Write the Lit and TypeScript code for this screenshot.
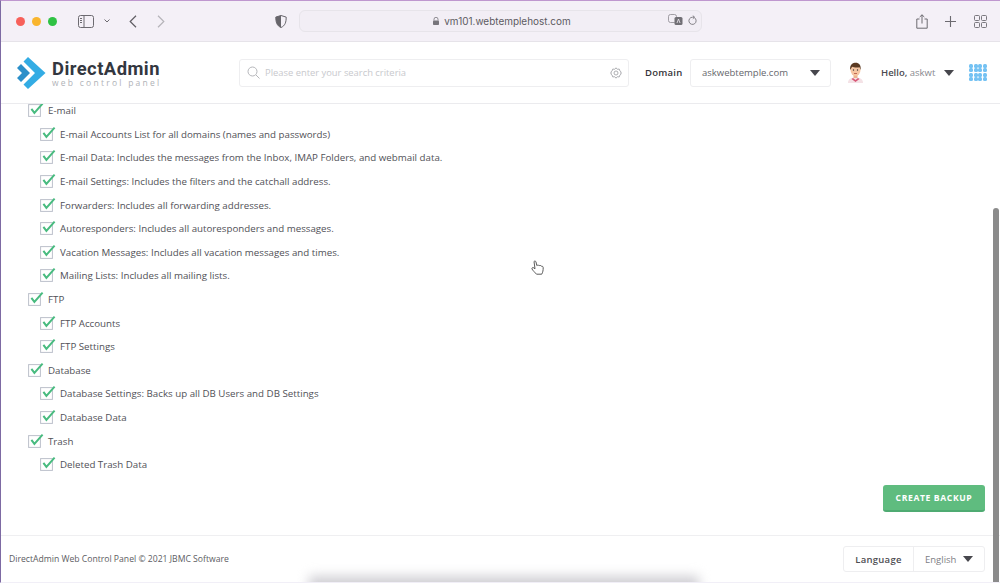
import { LitElement, html, css } from "lit";
import { customElement } from "lit/decorators.js";

type Row = { label: string; sub?: boolean };

const ROWS: Row[] = [
  { label: "E-mail" },
  { label: "E-mail Accounts List for all domains (names and passwords)", sub: true },
  { label: "E-mail Data: Includes the messages from the Inbox, IMAP Folders, and webmail data.", sub: true },
  { label: "E-mail Settings: Includes the filters and the catchall address.", sub: true },
  { label: "Forwarders: Includes all forwarding addresses.", sub: true },
  { label: "Autoresponders: Includes all autoresponders and messages.", sub: true },
  { label: "Vacation Messages: Includes all vacation messages and times.", sub: true },
  { label: "Mailing Lists: Includes all mailing lists.", sub: true },
  { label: "FTP" },
  { label: "FTP Accounts", sub: true },
  { label: "FTP Settings", sub: true },
  { label: "Database" },
  { label: "Database Settings: Backs up all DB Users and DB Settings", sub: true },
  { label: "Database Data", sub: true },
  { label: "Trash" },
  { label: "Deleted Trash Data", sub: true },
];

const caret = html`<svg class="caret" width="10" height="6" viewBox="0 0 10 6"><path d="M0 0h10L5 6z" fill="#47474d"/></svg>`;

const check = html`<svg class="check" width="16" height="15" viewBox="0 0 16 15">
  <rect x="0.6" y="2.6" width="11.800" height="11.800" fill="none" stroke="#bcc0cb" stroke-width="1"/>
  <path d="M3.400 6.800l3 4L14.600 1.600" fill="none" stroke="#48bb7f" stroke-width="2"/>
</svg>`;

@customElement("app-root")
export class AppRoot extends LitElement {
  static styles = css`
    :host {
      display: block;
      width: 1000px;
      height: 583px;
      overflow: hidden;
      font-family: "Open Sans", sans-serif;
      color: #4a4a50;
    }
    .window {
      position: relative;
      display: flex;
      flex-direction: column;
      width: 1000px;
      height: 583px;
      box-sizing: border-box;
      background: #fff;
      border-left: 1px solid #7d6aa3;
      border-top: 1px solid #bf97cf;
      border-bottom: 1px solid #f1eff7;
      overflow: hidden;
    }
    /* Browser toolbar */
    .toolbar {
      flex: none;
      height: 41px;
      box-sizing: border-box;
      display: flex;
      align-items: center;
      background: #f4f0f7;
      border-bottom: 1px solid #e6e3e9;
      padding-left: 15px;
    }
    .dots { display: flex; gap: 7px; width: 62px; }
    .dot { width: 9px; height: 9px; border-radius: 50%; }
    .r { background: #f7605a; }
    .y { background: #f9b52e; }
    .g { background: #2fc244; }
    .tool { display: block; flex: none; }
    .t-chev { margin-left: 10px; }
    .t-back { margin-left: 19px; }
    .t-fwd { margin-left: 20px; }
    .t-shield { margin-left: 110px; }
    .address {
      flex: none;
      position: relative;
      margin-left: 12px;
      width: 403px;
      height: 22px;
      box-sizing: border-box;
      border: 1px solid #e7e4ea;
      border-radius: 6px;
      background: #f2eef5;
      display: flex;
      align-items: center;
      justify-content: center;
      font-size: 9.950px;
      color: #5d5b62;
      gap: 5px;
      padding-left: 3px;
      font-family: "Inter", sans-serif;
    }
    .addr-right {
      position: absolute;
      right: 4px;
      top: 3px;
      display: flex;
      gap: 5px;
      align-items: center;
    }
    .t-share { margin-left: 214px; }
    .t-plus { margin-left: 17px; }
    .t-tabs { margin-left: 18px; }

    /* Site header */
    .header {
      flex: none;
      height: 62px;
      box-sizing: border-box;
      display: flex;
      align-items: center;
      border-bottom: 1px solid #ebebee;
      padding-left: 15px;
    }
    .logo { display: flex; align-items: center; width: 223px; gap: 6px; }
    .logo-text { display: flex; flex-direction: column; padding-top: 1px; }
    .logo-name {
      font-family: "Roboto", sans-serif;
      font-weight: 700;
      font-size: 18.400px;
      line-height: 18px;
      letter-spacing: 0.45px;
      color: #33373f;
    }
    .logo-sub {
      font-family: "Open Sans", sans-serif;
      font-size: 8.500px;
      line-height: 9px;
      letter-spacing: 2.250px;
      color: #b0b2b7;
      white-space: nowrap;
    }
    .search {
      flex: none;
      width: 390px;
      height: 28px;
      box-sizing: border-box;
      border: 1px solid #eeeef0;
      border-radius: 3px;
      display: flex;
      align-items: center;
      padding: 0 6px 0 7px;
      gap: 5px;
      font-size: 9.400px;
      color: #c8c9cd;
    }
    .search span { flex: 1; }
    .domain-label {
      margin-left: 16px;
      width: 45px;
      font-size: 9.500px;
      font-weight: 600;
      color: #35353a;
      letter-spacing: 0.25px;
    }
    .select {
      flex: none;
      width: 141px;
      height: 28px;
      box-sizing: border-box;
      border: 1px solid #eeeef0;
      border-radius: 3px;
      display: flex;
      align-items: center;
      justify-content: space-between;
      padding: 0 10px 0 11px;
      font-size: 9.500px;
      color: #66666c;
    }
    .avatar { margin-left: 16px; flex: none; }
    .hello { margin-left: 17px; width: 63px; font-size: 9.500px; color: #88888e; white-space: nowrap; }
    .hello b { font-weight: 600; color: #4b4b50; }
    .apps {
      margin-left: 15px;
      display: grid;
      grid-template-columns: repeat(4, 4px);
      grid-auto-rows: 4px;
      gap: 0.5px;
    }
    .apps i { background: #74c2f3; border-radius: 1.500px; }

    /* Content */
    .content {
      flex: 1;
      min-height: 0;
      overflow: hidden;
      display: flex;
      flex-direction: column;
    }
    .rows { display: flex; flex-direction: column; margin-top: -5px; padding-left: 27px; height: 371px; }
    .row {
      height: 23.600px;
      flex: none;
      display: flex;
      align-items: center;
      gap: 4px;
      font-size: 9.740px;
      color: #515157;
      white-space: nowrap;
    }
    .row.sub { padding-left: 12px; }
    .check { flex: none; margin-top: -2px; }
    .actions { display: flex; justify-content: flex-end; padding-right: 15px; margin-top: 15px; }
    .btn {
      width: 102px;
      height: 27px;
      box-sizing: border-box;
      border: 0;
      border-bottom: 2px solid #4fab72;
      border-radius: 3px;
      background: #5fbc7f;
      color: #fff;
      font: 700 8.600px "Open Sans", sans-serif;
      letter-spacing: 0.62px;
      padding: 0;
    }

    /* Footer */
    .footer {
      flex: none;
      height: 47px;
      box-sizing: border-box;
      border-top: 1px solid #efeff1;
      display: flex;
      align-items: center;
      justify-content: space-between;
      padding: 0 15px 0 8px;
      font-size: 8.650px;
      color: #5c5c62;
    }
    .lang {
      display: flex;
      width: 142px;
      height: 26px;
      box-sizing: border-box;
      border: 1px solid #eeeef0;
      border-radius: 3px;
      font-size: 9.500px;
    }
    .lang-label {
      width: 69px;
      border-right: 1px solid #eeeef0;
      display: flex;
      align-items: center;
      justify-content: center;
      font-weight: 600;
      letter-spacing: 0.25px;
      color: #4e4e53;
    }
    .lang-value {
      flex: 1;
      display: flex;
      align-items: center;
      justify-content: space-between;
      padding: 0 11px 0 11px;
      color: #808085;
    }

    /* Overlays */
    .scrollbar {
      position: absolute;
      left: 992px;
      top: 207px;
      width: 6px;
      height: 376px;
      background: #8b8b8b;
      border-radius: 3px 3px 0 0;
    }
    .cursor { position: absolute; left: 530px; top: 259px; }
    .dock {
      position: absolute;
      left: 308px;
      top: 575px;
      width: 390px;
      height: 24px;
      background: #d0cfd4;
      filter: blur(6px);
    }
  `;

  render() {
    const stroke = "#6c6a70";
    return html`<div class="window">
      <div class="toolbar">
        <div class="dots"><div class="dot r"></div><div class="dot y"></div><div class="dot g"></div></div>
        <svg class="tool" width="16" height="13" viewBox="0 0 16 13" fill="none" stroke="${stroke}">
          <rect x="0.5" y="0.5" width="15" height="12" rx="2"/><path d="M6 .5v12M2 3.500h2M2 5.500h2M2 7.500h2"/>
        </svg>
        <svg class="tool t-chev" width="6" height="4" viewBox="0 0 6 4" fill="none" stroke="${stroke}"><path d="M.5.5L3 3 5.500.5"/></svg>
        <svg class="tool t-back" width="8" height="13" viewBox="0 0 8 13" fill="none" stroke="#5f5d63" stroke-width="1.200"><path d="M7 .8L1.200 6.500 7 12.200"/></svg>
        <svg class="tool t-fwd" width="8" height="13" viewBox="0 0 8 13" fill="none" stroke="#b5b3b9" stroke-width="1.200"><path d="M1 .8l5.800 5.700L1 12.200"/></svg>
        <svg class="tool t-shield" width="12" height="13" viewBox="0 0 12 13">
          <path d="M6 .5l5.200 1.600c0 5-1 8.600-5.200 10.400C1.800 10.700.8 7.100.8 2.100z" fill="#f4f0f7" stroke="#67656b"/>
          <path d="M6 .5v12C1.800 10.700.8 7.100.8 2.100z" fill="#67656b"/>
        </svg>
        <div class="address">
          <svg width="6" height="8" viewBox="0 0 6 8"><path d="M1 3.500V2.300a2 2 0 0 1 4 0v1.200" fill="none" stroke="#77757b" stroke-width=".8"/><rect y="3.400" width="6" height="4.600" rx=".8" fill="#77757b"/></svg>
          <span>vm101.webtemplehost.com</span>
          <div class="addr-right">
            <svg width="15" height="12" viewBox="0 0 15 12">
              <rect x=".5" y=".5" width="8" height="8" rx="2" fill="none" stroke="#8b898f" stroke-width=".8"/>
              <rect x="6.500" y="3" width="8" height="8" rx="1.500" fill="#716f75"/>
              <path d="M9 9l1.500-4L12 9" fill="none" stroke="#f2eef5" stroke-width=".8"/>
            </svg>
            <svg width="9" height="11" viewBox="0 0 9 11" fill="none" stroke="#77757b" stroke-width=".9">
              <path d="M6.500 2.800a3.600 3.600 0 1 1-2-.6h2M4.800.6l1.700 1.600-1.700 1.600"/>
            </svg>
          </div>
        </div>
        <svg class="tool t-share" width="12" height="15" viewBox="0 0 12 15" fill="none" stroke="${stroke}" stroke-width="1">
          <path d="M3.500 5H.8v9.200h10.400V5H8.500M6 9.500V.8M3.700 3L6 .8 8.300 3"/>
        </svg>
        <svg class="tool t-plus" width="11" height="11" viewBox="0 0 11 11" fill="none" stroke="${stroke}" stroke-width="1.100"><path d="M5.500 0v11M0 5.500h11"/></svg>
        <svg class="tool t-tabs" width="13" height="13" viewBox="0 0 13 13" fill="none" stroke="${stroke}" stroke-width=".9">
          <rect x=".5" y=".5" width="5" height="5" rx="1"/><rect x="7.500" y=".5" width="5" height="5" rx="1"/>
          <rect x=".5" y="7.500" width="5" height="5" rx="1"/><rect x="7.500" y="7.500" width="5" height="5" rx="1"/>
        </svg>
      </div>

      <div class="header">
        <div class="logo">
          <svg width="30" height="32" viewBox="0 0 30 32">
            <path d="M1 11l4-4 9 9-9 9-4-4 5-5z" fill="#2b8fc9"/>
            <path d="M12 0l17.500 16L12 32l-4.500-4.500L19 16 7.500 4.500z" fill="#33ace4"/>
          </svg>
          <div class="logo-text">
            <div class="logo-name">DirectAdmin</div>
            <div class="logo-sub">web control panel</div>
          </div>
        </div>
        <div class="search">
          <svg width="13" height="13" viewBox="0 0 13 13" fill="none" stroke="#b5b6ba" stroke-width="1"><circle cx="5.500" cy="5.500" r="4.500"/><path d="M9 9l3.500 3.500"/></svg>
          <span>Please enter your search criteria</span>
          <svg width="12" height="12" viewBox="0 0 12 12" fill="none" stroke="#a5a6aa" stroke-width=".9"><circle cx="6" cy="6" r="2"/><path d="M6 .8l1.300 1.500 1.900-.3.600 1.800 1.500 1.200-.8 1 .8 1-1.500 1.200-.6 1.800-1.900-.3L6 11.200l-1.300-1.500-1.900.3-.6-1.800L.7 7l.8-1-.8-1 1.500-1.200.6-1.800 1.900.3z"/></svg>
        </div>
        <div class="domain-label">Domain</div>
        <div class="select"><span>askwebtemple.com</span>${caret}</div>
        <svg class="avatar" width="17" height="21" viewBox="0 0 17 21">
          <path d="M1 21c0-4 3-5.500 7.500-5.500S16 17 16 21z" fill="#f4e2e6"/>
          <path d="M6 16l2.500 2 2.500-2 1.500 1-4 3-4-3z" fill="#d85a78"/>
          <rect x="6.500" y="12" width="4" height="4" fill="#eeb48f"/>
          <ellipse cx="8.500" cy="8" rx="5" ry="6" fill="#f6c6a3"/>
          <circle cx="6.500" cy="8" r=".7" fill="#333"/><circle cx="10.500" cy="8" r=".7" fill="#333"/>
          <path d="M7 11.500h3" stroke="#b5533f" stroke-width=".8"/>
          <path d="M3.200 8C2.500 2.500 6 .8 8.800.8c3 0 5.500 2 4.800 7.200l-1-2.800c-2 .6-5.600.6-7.500-.4z" fill="#5b3a22"/>
        </svg>
        <div class="hello"><b>Hello,</b> askwt</div>
        ${caret}
        <div class="apps">${Array.from({ length: 16 }, () => html`<i></i>`)}</div>
      </div>

      <div class="content">
        <div class="rows">
          ${ROWS.map((r) => html`<div class="row ${r.sub ? "sub" : ""}">${check}<span>${r.label}</span></div>`)}
        </div>
        <div class="actions"><button class="btn">CREATE BACKUP</button></div>
      </div>

      <div class="footer">
        <span>DirectAdmin Web Control Panel © 2021 JBMC Software</span>
        <div class="lang">
          <div class="lang-label">Language</div>
          <div class="lang-value"><span>English</span>${caret}</div>
        </div>
      </div>

      <div class="scrollbar"></div>
      <svg class="cursor" width="13" height="16" viewBox="0 0 13 16">
        <path d="M3 1.500c.8-.8 1.800-.4 2 .5l.8 3.500c1-.6 2-.4 2.300.2 1-.5 1.900-.2 2.200.5 1-.3 1.900.4 1.900 1.500 0 2.500-.3 4.500-1.500 6.500H5.500C4 12.500 1.800 10.500 1 9c-.4-1 .7-1.900 1.700-1.200l1.300 1z" fill="#fff" stroke="#4a4a4a" stroke-width=".9"/>
      </svg>
      <div class="dock"></div>
    </div>`;
  }
}
